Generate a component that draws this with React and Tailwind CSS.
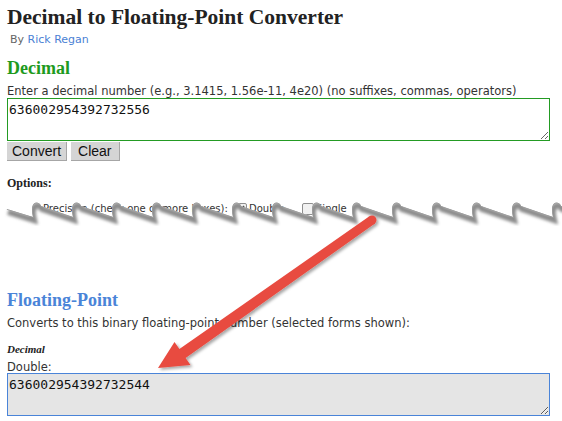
import React from 'react';

// torn-paper edge: one "breaking wave" tooth every 40px
function buildEdge() {
  let d = 'M7 19 L33 27';
  for (let h = 35; h < 600; h += 40) {
    d += ` Q${h - 5} 14 ${h + 1} 12.5 Q${h + 5} 12.5 ${h + 6} 16 L${h + 38} 27`;
  }
  return d;
}

const edge = buildEdge();
const below = edge + ' L600 40 L0 40 L0 19 Z';

function Checkbox({ checked }) {
  return (
    <span className="relative mt-[1px] inline-block h-[12px] w-[12px] shrink-0 rounded-[2px] border border-[#8e8e8e] bg-[#f1f1f1]">
      {checked && (
        <svg className="absolute left-[1px] top-[1px]" width="8" height="8" viewBox="0 0 8 8">
          <path d="M1 4 L3 6 L7 1" fill="none" stroke="#333" strokeWidth="1.4" />
        </svg>
      )}
    </span>
  );
}

function TornOptions() {
  return (
    <div className="relative h-[36px] w-full">
      <div className="flex items-start pl-[36px] pt-[12px] font-['DejaVu_Sans',sans-serif] text-[10px] leading-[13px] text-[#333]">
        <span className="inline-block w-[192px] shrink-0">Precision (check one or more boxes):</span>
        <Checkbox checked />
        <span className="ml-[2px] inline-block w-[53px] shrink-0">Double</span>
        <Checkbox />
        <span className="ml-[2px]">Single</span>
      </div>
      <svg className="absolute left-[-7px] top-0" width="562" height="36" viewBox="0 0 562 36">
        <defs>
          <clipPath id="tornBelow">
            <path d={below} />
          </clipPath>
          <filter id="tornSoft" x="-5%" y="-100%" width="110%" height="300%">
            <feGaussianBlur stdDeviation="1.8" />
          </filter>
        </defs>
        <path d={below} fill="#fff" />
        <g clipPath="url(#tornBelow)">
          <path d={edge} fill="none" stroke="#8c8c8c" strokeWidth="6" transform="translate(1 3)" filter="url(#tornSoft)" />
          <path d={edge} fill="none" stroke="#9a9a9a" strokeWidth="1.5" />
        </g>
      </svg>
    </div>
  );
}

function Arrow() {
  return (
    <svg className="pointer-events-none absolute left-0 top-0" width="562" height="421" viewBox="0 0 562 421">
      <defs>
        <filter id="arrowShadow" x="-10%" y="-10%" width="130%" height="130%">
          <feDropShadow dx="2" dy="2" stdDeviation="1.5" floodColor="#000" floodOpacity="0.35" />
        </filter>
      </defs>
      <g filter="url(#arrowShadow)" fill="#e84b40">
        <polygon points="374.6,223.7 185.6,358 190.5,365 158,368 174.5,342 179.4,349 369.4,216.3" />
        <circle cx="372" cy="220" r="4.5" />
      </g>
    </svg>
  );
}

export default function App() {
  return (
    <div className="relative h-[421px] w-[562px] overflow-hidden bg-white pl-[7px] font-['DejaVu_Sans',sans-serif] text-[#333]">
      <h1 className="mt-[6px] font-['Liberation_Serif',serif] text-[21.5px] font-bold leading-[22px] text-[#222]">
        Decimal to Floating-Point Converter
      </h1>
      <div className="mt-[5px] pl-[3px] text-[11px] leading-[13px] text-[#666]">
        By <span className="text-[#4a7fd4]">Rick Regan</span>
      </div>

      <h2 className="mt-[12px] font-['Liberation_Serif',serif] text-[18px] font-bold leading-[20px] text-[#1e9a1e]">
        Decimal
      </h2>
      <p className="mt-[7px] text-[11.5px] leading-[13px]">
        Enter a decimal number (e.g., 3.1415, 1.56e-11, 4e20) (no suffixes, commas, operators)
      </p>
      <textarea
        readOnly
        value="636002954392732556"
        className="block h-[43px] w-[543px] border border-[#239b23] bg-white pl-[1px] pt-[3px] font-['DejaVu_Sans_Mono',monospace] text-[13px] leading-[15px] text-[#111] outline-none"
      />
      <div className="mt-[1px] flex gap-[4px]">
        <button className="h-[19px] border-b border-r border-[#a6a6a6] bg-[#d5d5d5] px-[5px] font-['Liberation_Sans',Arial,sans-serif] text-[14px] leading-[16px] text-[#111]">
          Convert
        </button>
        <button className="h-[19px] border-b border-r border-[#a6a6a6] bg-[#d5d5d5] px-[7px] font-['Liberation_Sans',Arial,sans-serif] text-[14px] leading-[16px] text-[#111]">
          Clear
        </button>
      </div>

      <h3 className="mt-[15px] font-['Liberation_Serif',serif] text-[12px] font-bold leading-[14px] text-[#222]">
        Options:
      </h3>
      <TornOptions />

      <h2 className="mt-[64px] font-['Liberation_Serif',serif] text-[18px] font-bold leading-[20px] text-[#4a84d8]">
        Floating-Point
      </h2>
      <p className="mt-[7px] text-[11.5px] leading-[13px]">
        Converts to this binary floating-point number (selected forms shown):
      </p>
      <h4 className="mt-[13px] font-['Liberation_Serif',serif] text-[11px] font-bold italic leading-[13px] text-[#222]">
        Decimal
      </h4>
      <div className="mt-[5px] text-[11.5px] leading-[12px]">Double:</div>
      <textarea
        readOnly
        value="636002954392732544"
        className="block h-[43px] w-[543px] border border-[#4a84d8] bg-[#e5e5e5] pl-[1px] pt-[3px] font-['DejaVu_Sans_Mono',monospace] text-[13px] leading-[15px] text-[#111] outline-none"
      />

      <Arrow />
    </div>
  );
}
